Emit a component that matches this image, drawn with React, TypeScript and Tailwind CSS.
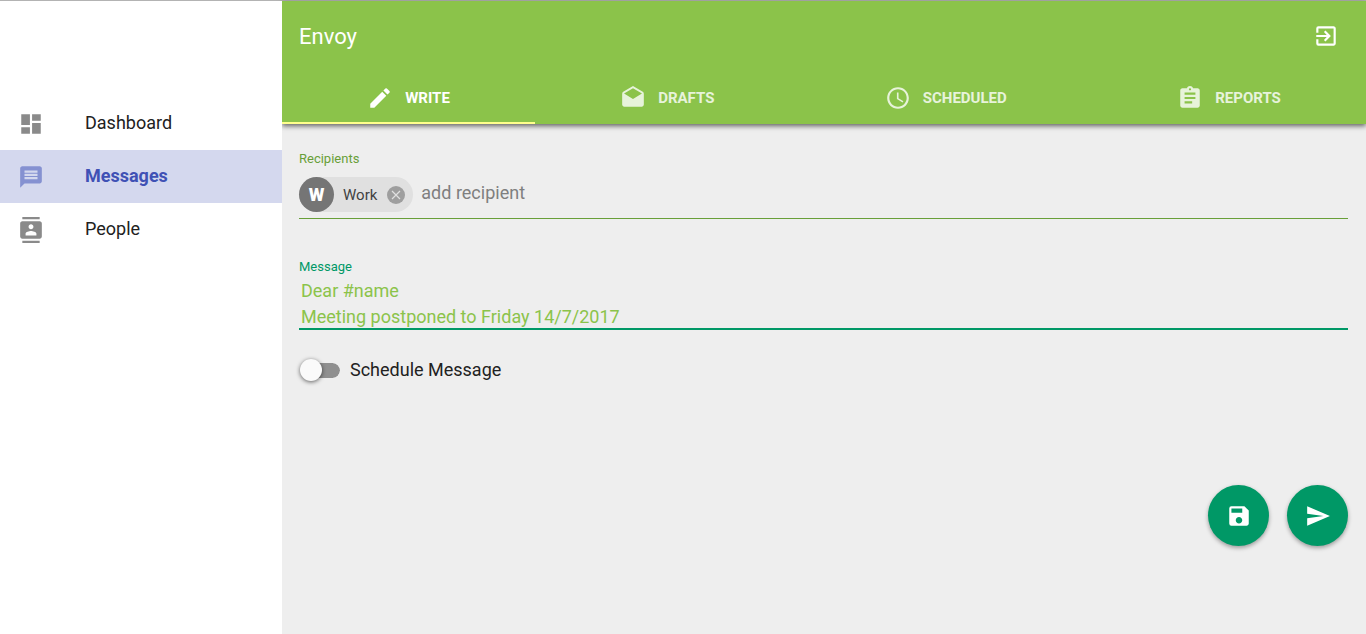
import { useState } from 'react';
import type { IconType } from 'react-icons';
import {
  MdAccessTime,
  MdAssignment,
  MdContacts,
  MdDashboard,
  MdDrafts,
  MdEdit,
  MdExitToApp,
  MdMessage,
  MdSave,
  MdSend,
} from 'react-icons/md';

interface NavItem {
  label: string;
  icon: IconType;
}

const pages: NavItem[] = [
  { label: 'Dashboard', icon: MdDashboard },
  { label: 'Messages', icon: MdMessage },
  { label: 'People', icon: MdContacts },
];

const tabs: NavItem[] = [
  { label: 'Write', icon: MdEdit },
  { label: 'Drafts', icon: MdDrafts },
  { label: 'Scheduled', icon: MdAccessTime },
  { label: 'Reports', icon: MdAssignment },
];

function Sidebar() {
  const [page, setPage] = useState('Messages');

  return (
    <nav className="relative z-10 w-[282px] shrink-0 bg-white pt-24">
      {pages.map(({ label, icon: Icon }) => (
        <a key={label} href={'#' + label.toLowerCase()} onClick={() => setPage(label)}
          className={'flex h-[53px] items-center pb-0.5 pl-[18px] text-lg '
            + (page === label ? 'bg-[#d4d8ee] font-bold text-[#3f51b5]' : 'text-[#212121]')}>
          <span className="w-[67px]">
            <Icon className={'mt-0.5 size-[26px] ' + (page === label ? 'text-[#8591d1]' : 'text-[#8a8a8a]')} />
          </span>
          {label}
        </a>
      ))}
    </nav>
  );
}

function Header() {
  const [tab, setTab] = useState('Write');

  return (
    <header className="relative bg-[#8bc34a] text-white shadow-[0_2px_5px_rgba(0,0,0,0.6)]">
      <div className="flex h-[70px] items-center justify-between pr-[27px] pl-[17px]">
        <h1 className="text-[22px]">Envoy</h1>
        <button aria-label="Sign out">
          <MdExitToApp className="size-[26px]" />
        </button>
      </div>
      <div className="flex h-[53px]" role="tablist">
        {tabs.map(({ label, icon: Icon }) => (
          <button key={label} role="tab" aria-selected={tab === label} onClick={() => setTab(label)}
            className={'flex flex-auto items-center justify-center border-y-2 border-t-transparent px-3 text-[15px] font-bold uppercase '
              + (tab === label ? 'border-b-[#ffff8d]' : 'border-b-transparent')}>
            <span className={'flex items-center gap-3 ' + (tab === label ? '' : 'opacity-80')}>
              <Icon className="size-[26px]" />
              <span className="pt-0.5">{label}</span>
            </span>
          </button>
        ))}
      </div>
    </header>
  );
}

function Recipients() {
  const [recipients, setRecipients] = useState(['Work']);

  return (
    <div>
      <label htmlFor="recipient" className="block text-[13px] leading-5 text-[#689f38]">Recipients</label>
      <div className="flex items-center border-b border-[#689f38] pt-2 pb-1.5">
        {recipients.map(name => (
          <span key={name} className="mr-2 flex h-[35px] items-center rounded-full bg-[#e0e0e0] pr-2 text-[15px] text-[#424242]">
            <span className="mr-[9px] flex size-[35px] items-center justify-center rounded-full bg-[#757575] text-lg font-black text-white">
              {name.charAt(0)}
            </span>
            <span className="pt-0.5">{name}</span>
            <button aria-label={'Remove ' + name} onClick={() => setRecipients(recipients.filter(r => r !== name))}
              className="ml-2.5 flex size-[18px] items-center justify-center rounded-full bg-[#9e9e9e]">
              <svg viewBox="0 0 18 18" className="size-[18px] stroke-[#e0e0e0]" fill="none">
                <path d="M5 5l8 8M13 5l-8 8" strokeWidth="1.2" />
              </svg>
            </button>
          </span>
        ))}
        <input id="recipient" placeholder="add recipient"
          className="min-w-0 flex-1 pb-1 text-lg outline-none placeholder:text-[#7f7f7f]" />
      </div>
    </div>
  );
}

export default function App() {
  const [message, setMessage] = useState('Dear #name\nMeeting postponed to Friday 14/7/2017');
  const [scheduled, setScheduled] = useState(false);

  return (
    <div className="flex min-h-screen border-t border-[#b3b3b3] bg-[#eeeeee] font-[Roboto,sans-serif]">
      <Sidebar />
      <div className="min-w-0 flex-1">
        <Header />
        <main className="pt-[25px] pr-[18px] pl-[17px]">
          <Recipients />

          <label htmlFor="message" className="mt-[38px] block text-[13px] leading-5 text-[#009866]">Message</label>
          <textarea id="message" rows={2} value={message} onChange={e => setMessage(e.target.value)}
            className="block h-[53px] w-full resize-none overflow-hidden border-b-2 border-[#009866] px-0.5 pt-px text-lg leading-[26px] text-[#8bc34a] outline-none" />

          <label className="mt-7 flex w-fit items-center gap-2.5 text-lg leading-6 text-[#212121]">
            <input type="checkbox" role="switch" checked={scheduled} onChange={e => setScheduled(e.target.checked)}
              className="flex h-[15px] w-[41px] appearance-none items-center rounded-full border-l-5 border-transparent bg-[#8f8f8f] bg-clip-padding before:-ml-1 before:size-[22px] before:shrink-0 before:rounded-full before:bg-[#fafafa] before:shadow-[0_1px_4px_rgba(0,0,0,0.6)] checked:before:ml-3.5" />
            Schedule Message
          </label>

          <div className="mt-[103px] flex justify-end gap-[18px]">
            <button aria-label="Save draft" className="flex size-[61px] items-center justify-center rounded-full bg-[#009866] text-white shadow-[0_2px_4px_rgba(0,0,0,0.35)]">
              <MdSave className="size-[26px]" />
            </button>
            <button aria-label="Send" className="flex size-[61px] items-center justify-center rounded-full bg-[#009866] text-white shadow-[0_2px_4px_rgba(0,0,0,0.35)]">
              <MdSend className="size-[26px]" />
            </button>
          </div>
        </main>
      </div>
    </div>
  );
}
